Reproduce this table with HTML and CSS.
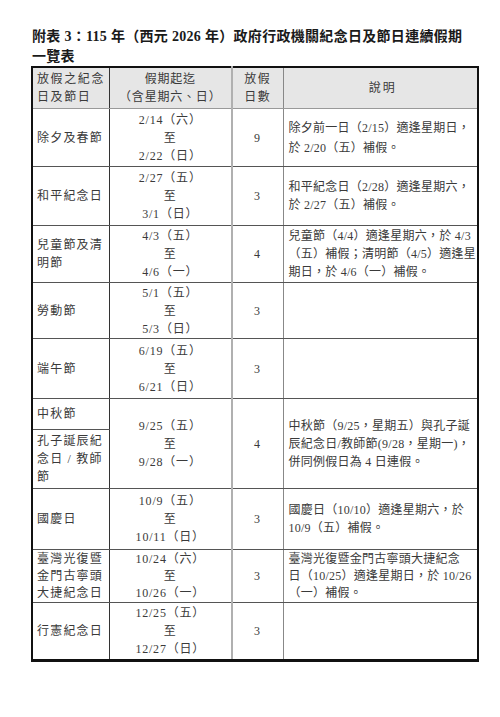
FILE: index.html
```html
<!DOCTYPE html>
<html lang="zh-Hant">
<head>
<meta charset="utf-8">
<link rel="stylesheet" href="styles.css">
</head>
<body>
<div class="page">
  <h1 class="title">附表 3：115 年（西元 2026 年）政府行政機關紀念日及節日連續假期<br>一覽表</h1>
  <table class="tbl">
    <colgroup>
      <col class="c1"><col class="c2"><col class="c3"><col class="c4">
    </colgroup>
    <thead>
      <tr class="hd">
        <th class="name">放假之紀念<br>日及節日</th>
        <th class="period">假期起迄<br>（含星期六、日）</th>
        <th class="days">放假<br>日數</th>
        <th class="desc-h">說明</th>
      </tr>
    </thead>
    <tbody>
      <tr class="r58">
        <td class="name">除夕及春節</td>
        <td class="period">2/14（六）<br>至<br>2/22（日）</td>
        <td class="days">9</td>
        <td class="desc wide">除夕前一日（2/15）適逢星期日，<br>於 2/20（五）補假。</td>
      </tr>
      <tr class="r59">
        <td class="name">和平紀念日</td>
        <td class="period">2/27（五）<br>至<br>3/1（日）</td>
        <td class="days">3</td>
        <td class="desc">和平紀念日（2/28）適逢星期六，<br>於 2/27（五）補假。</td>
      </tr>
      <tr class="r57">
        <td class="name">兒童節及清<br>明節</td>
        <td class="period">4/3（五）<br>至<br>4/6（一）</td>
        <td class="days">4</td>
        <td class="desc">兒童節（4/4）適逢星期六，於 4/3<br>（五）補假；清明節（4/5）適逢星<br>期日，於 4/6（一）補假。</td>
      </tr>
      <tr class="r56">
        <td class="name">勞動節</td>
        <td class="period">5/1（五）<br>至<br>5/3（日）</td>
        <td class="days">3</td>
        <td class="desc"></td>
      </tr>
      <tr class="r60">
        <td class="name">端午節</td>
        <td class="period">6/19（五）<br>至<br>6/21（日）</td>
        <td class="days">3</td>
        <td class="desc"></td>
      </tr>
      <tr class="r31">
        <td class="name">中秋節</td>
        <td class="period" rowspan="2">9/25（五）<br>至<br>9/28（一）</td>
        <td class="days" rowspan="2">4</td>
        <td class="desc" rowspan="2">中秋節（9/25，星期五）與孔子誕<br>辰紀念日/教師節(9/28，星期一)，<br>併同例假日為 4 日連假。</td>
      </tr>
      <tr class="r59">
        <td class="name">孔子誕辰紀<br>念日 / 教師<br>節</td>
      </tr>
      <tr class="r61">
        <td class="name">國慶日</td>
        <td class="period">10/9（五）<br>至<br>10/11（日）</td>
        <td class="days">3</td>
        <td class="desc">國慶日（10/10）適逢星期六，於<br>10/9（五）補假。</td>
      </tr>
      <tr class="r53">
        <td class="name">臺灣光復暨<br>金門古寧頭<br>大捷紀念日</td>
        <td class="period">10/24（六）<br>至<br>10/26（一）</td>
        <td class="days">3</td>
        <td class="desc">臺灣光復暨金門古寧頭大捷紀念<br>日（10/25）適逢星期日，於 10/26<br>（一）補假。</td>
      </tr>
      <tr class="r58">
        <td class="name">行憲紀念日</td>
        <td class="period">12/25（五）<br>至<br>12/27（日）</td>
        <td class="days">3</td>
        <td class="desc"></td>
      </tr>
    </tbody>
  </table>
</div>
</body>
</html>
```
FILE: styles.css
```css
html, body {
  margin: 0;
  padding: 0;
  background: #ffffff;
}

body {
  font-family: "Liberation Serif", "Noto Sans CJK TC", serif;
  color: #3a3a3a;
}

.page {
  padding: 27px 0 0 32px;
}

.title {
  margin: 0 0 -1px 0;
  font-size: 14px;
  line-height: 20px;
  font-weight: bold;
  color: #1a1a1a;
  letter-spacing: 0.3px;
}

.tbl {
  margin-left: -1px;
  width: 446px;
  border-collapse: collapse;
  table-layout: fixed;
  border: 2px solid #111;
  border-bottom-width: 3px;
  font-size: 12px;
}

.c1 { width: 77px; }
.c2 { width: 123px; }
.c3 { width: 51px; }
.c4 { width: 195px; }

.tbl th,
.tbl td {
  padding: 0;
  vertical-align: middle;
  font-weight: normal;
  line-height: 18px;
  border-top: 1px solid #555;
  border-bottom: 1px solid #555;
  overflow: hidden;
}

.hd th {
  background: #e6e6e6;
  height: 40px;
  line-height: 18px;
  border-bottom: 1px solid #999;
}

.name {
  text-align: left;
  padding-left: 4px !important;
  letter-spacing: 1.2px;
  border-right: 1px solid #333;
}

.period {
  text-align: center;
  letter-spacing: 0.8px;
  border-right: 2px solid #b0b0b0;
}

.days {
  text-align: center;
  letter-spacing: 1.5px;
  border-right: 1px solid #888;
}

.desc,
.desc-h {
  text-align: left;
  padding-left: 5px !important;
  letter-spacing: 0.25px;
  white-space: nowrap;
}

.desc.wide { line-height: 20px; }

.desc-h {
  text-align: center;
  letter-spacing: 2px;
}

.tbl th.name { letter-spacing: 1.6px; }

.r53 td { line-height: 17px; }

.r31 { height: 31px; }
.r53 { height: 53px; }
.r56 { height: 56px; }
.r57 { height: 57px; }
.r58 { height: 58px; }
.r59 { height: 59px; }
.r60 { height: 60px; }
.r61 { height: 61px; }
```
